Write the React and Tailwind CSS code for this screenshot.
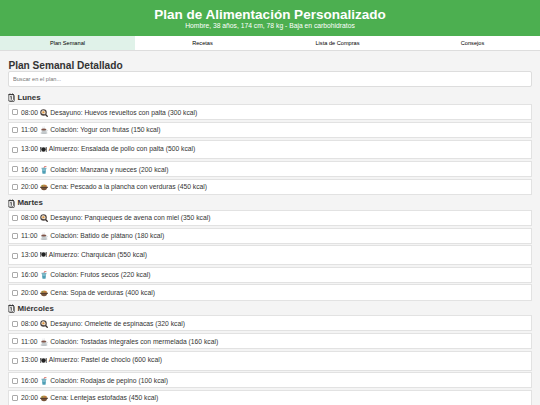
import React, { useState } from 'react';

const tabs = ['Plan Semanal', 'Recetas', 'Lista de Compras', 'Consejos'];

const days = [
  {
    name: 'Lunes',
    meals: [
      { time: '08:00', icon: 'egg', text: 'Desayuno: Huevos revueltos con palta (300 kcal)' },
      { time: '11:00', icon: 'coffee', text: 'Colación: Yogur con frutas (150 kcal)' },
      { time: '13:00', icon: 'plate', text: 'Almuerzo: Ensalada de pollo con palta (500 kcal)' },
      { time: '16:00', icon: 'cup', text: 'Colación: Manzana y nueces (200 kcal)' },
      { time: '20:00', icon: 'pot', text: 'Cena: Pescado a la plancha con verduras (450 kcal)' }
    ]
  },
  {
    name: 'Martes',
    meals: [
      { time: '08:00', icon: 'egg', text: 'Desayuno: Panqueques de avena con miel (350 kcal)' },
      { time: '11:00', icon: 'coffee', text: 'Colación: Batido de plátano (180 kcal)' },
      { time: '13:00', icon: 'plate', text: 'Almuerzo: Charquicán (550 kcal)' },
      { time: '16:00', icon: 'cup', text: 'Colación: Frutos secos (220 kcal)' },
      { time: '20:00', icon: 'pot', text: 'Cena: Sopa de verduras (400 kcal)' }
    ]
  },
  {
    name: 'Miércoles',
    meals: [
      { time: '08:00', icon: 'egg', text: 'Desayuno: Omelette de espinacas (320 kcal)' },
      { time: '11:00', icon: 'coffee', text: 'Colación: Tostadas integrales con mermelada (160 kcal)' },
      { time: '13:00', icon: 'plate', text: 'Almuerzo: Pastel de choclo (600 kcal)' },
      { time: '16:00', icon: 'cup', text: 'Colación: Rodajas de pepino (100 kcal)' },
      { time: '20:00', icon: 'pot', text: 'Cena: Lentejas estofadas (450 kcal)' }
    ]
  }
];

function MealIcon({ name }) {
  if (name === 'egg') {
    return (
      <svg className="h-[8px] w-[8px] shrink-0" viewBox="0 0 16 16">
        <path d="M10 10l4.5 4.5" stroke="#332c2a" strokeWidth="2.6" strokeLinecap="round" />
        <circle cx="7" cy="7" r="6.5" fill="#4b4340" />
        <path d="M3 5c1-3 5-3 6.5-1.500s3 5 .5 6.500-4-.5-5.500-.5-2.500-2.500-1.500-4.500z" fill="#f0e2d2" />
        <circle cx="6.8" cy="6.5" r="2.2" fill="#e2953a" />
      </svg>
    );
  }
  if (name === 'coffee') {
    return (
      <svg className="h-[8px] w-[8px] shrink-0" viewBox="0 0 16 16">
        <path d="M6 5c-2-2 1-2 0-4M9 5c-2-2 1-2 0-4" fill="none" stroke="#c9cdd0" strokeWidth="1" />
        <ellipse cx="8" cy="14" rx="7" ry="1.6" fill="#a9b0b4" />
        <path d="M2.5 7h10c0 4-2 7-5 7s-5-3-5-7z" fill="#c3c9cc" />
        <path d="M12 8c4-1 3 4-1 4" fill="none" stroke="#b3babd" strokeWidth="1.3" />
        <ellipse cx="7.5" cy="7" rx="5" ry="1.8" fill="#805447" />
      </svg>
    );
  }
  if (name === 'plate') {
    return (
      <svg className="h-[7px] w-[7px] shrink-0" viewBox="0 0 14 14">
        <circle cx="7" cy="7" r="4.5" fill="#222" />
        <path d="M1.3 2v10M12.7 2v10" stroke="#333" strokeWidth="1.4" />
        <path d="M.3 2v3h2.4V2M11.7 2.5v4h1.2" fill="none" stroke="#333" strokeWidth=".8" />
      </svg>
    );
  }
  if (name === 'cup') {
    return (
      <svg className="h-[8px] w-[8px] shrink-0" viewBox="0 0 16 16">
        <path d="M8 4l1-3 4-.5" fill="none" stroke="#d9655b" strokeWidth="1.8" />
        <path d="M3.5 4.5h9L11 15.5H5z" fill="#4f9fb5" />
        <path d="M4 7h8l-.4 2H4.400z" fill="#b0d8e2" />
        <path d="M3 3.5h10v1.800H3z" fill="#7da9b8" />
      </svg>
    );
  }
  return (
    <svg className="h-[8px] w-[8px] shrink-0" viewBox="0 0 16 16">
      <ellipse cx="8" cy="6" rx="6" ry="3.200" fill="#c9964a" />
      <circle cx="5.5" cy="5.5" r="1.5" fill="#7b9448" />
      <circle cx="10" cy="5.5" r="1.3" fill="#c0633f" />
      <path d="M1.500 8h13c0 4-2.500 6.500-6.500 6.500s-6.500-2.500-6.500-6.500z" fill="#74533a" />
      <path d="M0 8.500h16" stroke="#4e382c" strokeWidth="2" />
    </svg>
  );
}

function CalendarIcon() {
  return (
    <svg className="h-[9px] w-[7px] shrink-0" viewBox="0 0 14 18">
      <path d="M1.5 3h9.5v10.5l-2.500 2.500h-7z" fill="#f4f4f4" stroke="#333" strokeWidth="1.4" />
      <path d="M3 17h9l1.2-1.200V4.500" fill="none" stroke="#333" strokeWidth="1.3" />
      <path d="M1 3.200h11M4 1v3M9 1v3" stroke="#333" strokeWidth="1.8" />
      <path d="M4.700 7.500l1.800-1v7" fill="none" stroke="#333" strokeWidth="1.8" />
    </svg>
  );
}

function Meal({ meal }) {
  const [done, setDone] = useState(false);
  const tall = meal.icon === 'plate';

  return (
    <label
      className={`mb-[1.7px] flex shrink-0 items-center border border-[#e2e2e2] bg-white pl-[2.6px] ${
        tall ? 'h-[19.7px]' : 'h-[16.1px]'
      }`}
    >
      <input
        type="checkbox"
        checked={done}
        onChange={() => setDone(!done)}
        className={`mr-[3.1px] h-[6px] w-[6px] shrink-0 appearance-none rounded-[1px] border border-[#aaa] bg-white checked:bg-[#4caf50] ${
          tall ? 'mt-px' : 'mt-[0.5px]'
        }`}
      />
      <span className={`flex items-center whitespace-nowrap ${tall ? '-mt-px' : 'mt-[0.7px]'}`}>
        <span className="w-[17.2px]">{meal.time}</span>
        <span className="ml-[1.8px] flex">
          <MealIcon name={meal.icon} />
        </span>
        <span className={tall ? 'ml-[1.6px]' : 'ml-[2.2px]'}>{meal.text}</span>
      </span>
    </label>
  );
}

function App() {
  const [active, setActive] = useState(0);
  const [search, setSearch] = useState('');

  return (
    <div className="h-screen overflow-hidden bg-[#f4f4f4] font-['Liberation_Sans',Arial,sans-serif] text-[6.75px] leading-[8px] text-[#333]">
      {/* Header */}
      <header className="h-[36px] bg-[#4caf50] pt-[6.5px] text-center text-white">
        <h1 className="text-[13.5px] leading-[15px] font-bold">Plan de Alimentación Personalizado</h1>
        <p>Hombre, 38 años, 174 cm, 78 kg - Baja en carbohidratos</p>
      </header>

      {/* Tabs */}
      <nav className="flex h-[15px] border-b border-[#ddd] bg-white">
        {tabs.map((tab, i) => (
          <button
            key={tab}
            onClick={() => setActive(i)}
            className={`flex-1 text-[5.63px] text-black ${active === i ? 'bg-[#e0f2e9]' : 'bg-white'}`}
          >
            {tab}
          </button>
        ))}
      </nav>

      {/* Weekly plan */}
      <main className="px-[8.4px] pt-[8.4px]">
        <h2 className="h-[12px] text-[10.13px] leading-[13px] font-bold">Plan Semanal Detallado</h2>
        <input
          type="text"
          value={search}
          onChange={(e) => setSearch(e.target.value)}
          placeholder="Buscar en el plan..."
          className="block h-[16px] w-full rounded-[2px] border border-[#ddd] bg-white px-[3.6px] text-[5.63px] placeholder:text-[#777]"
        />
        <div className="mt-[3.7px]">
          {days
            .filter((day) => day.meals.some((m) => m.text.toLowerCase().includes(search.toLowerCase())))
            .map((day) => (
              <section key={day.name}>
                <h3 className="flex h-[13.1px] items-center gap-[2px] text-[7.9px] font-bold">
                  <CalendarIcon />
                  {day.name}
                </h3>
                {day.meals.map((meal) => (
                  <Meal key={meal.time} meal={meal} />
                ))}
              </section>
            ))}
        </div>
      </main>
    </div>
  );
}

export default App;
